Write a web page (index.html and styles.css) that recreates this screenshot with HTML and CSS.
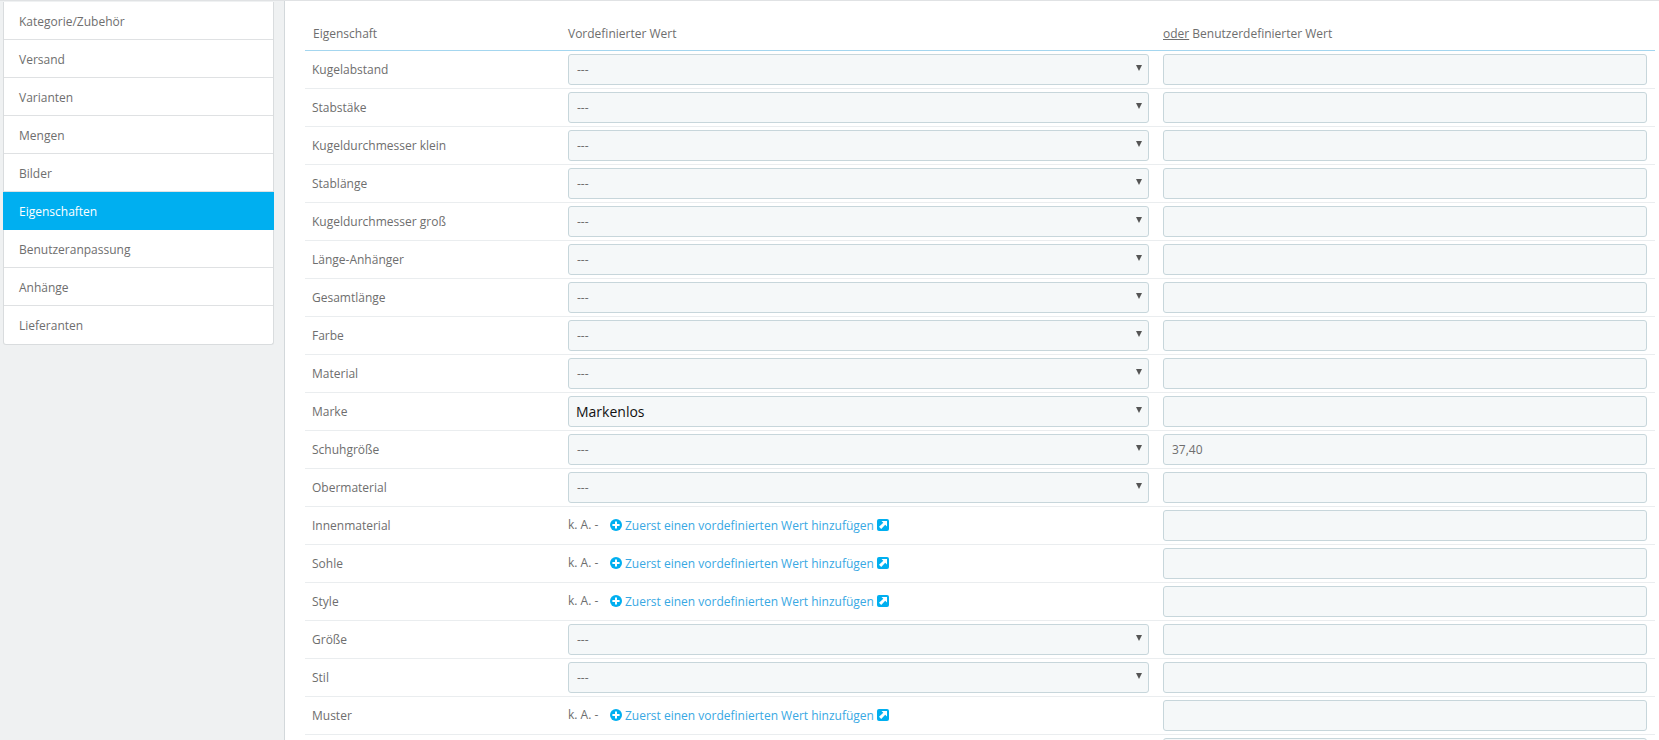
FILE: index.html
```html
<!DOCTYPE html>
<html lang="de">
<head>
<meta charset="utf-8">
<title>Eigenschaften</title>
<link rel="stylesheet" href="styles.css">
</head>
<body>
<svg class="defs" width="0" height="0" aria-hidden="true">
  <symbol id="plus" viewBox="0 0 12 12"><circle cx="6" cy="6" r="6" fill="currentColor"/><path d="M5 2.4h2V5h2.6v2H7v2.6H5V7H2.4V5H5z" fill="#fff"/></symbol>
  <symbol id="ext" viewBox="0 0 12 12"><rect width="12" height="12" rx="2" fill="currentColor"/><path d="M4.5 2h5.5v5.5L8.2 5.7 4.2 10 2 7.8 6.3 3.8z" fill="#fff"/></symbol>
</svg>
<div class="page">
  <nav class="side">
    <a class="side-item">Kategorie/Zubehör</a>
    <a class="side-item">Versand</a>
    <a class="side-item">Varianten</a>
    <a class="side-item">Mengen</a>
    <a class="side-item">Bilder</a>
    <a class="side-item active">Eigenschaften</a>
    <a class="side-item">Benutzeranpassung</a>
    <a class="side-item">Anhänge</a>
    <a class="side-item">Lieferanten</a>
  </nav>
  <main class="main">
    <table class="features">
      <colgroup><col class="c1"><col class="c2"><col class="c3"></colgroup>
      <thead>
        <tr><th>Eigenschaft</th><th>Vordefinierter Wert</th><th><u>oder</u> Benutzerdefinierter Wert</th></tr>
      </thead>
      <tbody>
        <tr><td>Kugelabstand</td><td><div class="sel"><select><option>---</option></select></div></td><td><input type="text"></td></tr>
        <tr><td>Stabstäke</td><td><div class="sel"><select><option>---</option></select></div></td><td><input type="text"></td></tr>
        <tr><td>Kugeldurchmesser klein</td><td><div class="sel"><select><option>---</option></select></div></td><td><input type="text"></td></tr>
        <tr><td>Stablänge</td><td><div class="sel"><select><option>---</option></select></div></td><td><input type="text"></td></tr>
        <tr><td>Kugeldurchmesser groß</td><td><div class="sel"><select><option>---</option></select></div></td><td><input type="text"></td></tr>
        <tr><td>Länge-Anhänger</td><td><div class="sel"><select><option>---</option></select></div></td><td><input type="text"></td></tr>
        <tr><td>Gesamtlänge</td><td><div class="sel"><select><option>---</option></select></div></td><td><input type="text"></td></tr>
        <tr><td>Farbe</td><td><div class="sel"><select><option>---</option></select></div></td><td><input type="text"></td></tr>
        <tr><td>Material</td><td><div class="sel"><select><option>---</option></select></div></td><td><input type="text"></td></tr>
        <tr><td>Marke</td><td><div class="sel"><select class="big"><option>Markenlos</option></select></div></td><td><input type="text"></td></tr>
        <tr><td>Schuhgröße</td><td><div class="sel"><select><option>---</option></select></div></td><td><input type="text" value="37,40"></td></tr>
        <tr><td>Obermaterial</td><td><div class="sel"><select><option>---</option></select></div></td><td><input type="text"></td></tr>
        <tr><td>Innenmaterial</td><td><div class="none"><span class="na">k. A. -</span><a class="add"><svg class="ico"><use href="#plus"/></svg>Zuerst einen vordefinierten Wert hinzufügen<svg class="ico"><use href="#ext"/></svg></a></div></td><td><input type="text"></td></tr>
        <tr><td>Sohle</td><td><div class="none"><span class="na">k. A. -</span><a class="add"><svg class="ico"><use href="#plus"/></svg>Zuerst einen vordefinierten Wert hinzufügen<svg class="ico"><use href="#ext"/></svg></a></div></td><td><input type="text"></td></tr>
        <tr><td>Style</td><td><div class="none"><span class="na">k. A. -</span><a class="add"><svg class="ico"><use href="#plus"/></svg>Zuerst einen vordefinierten Wert hinzufügen<svg class="ico"><use href="#ext"/></svg></a></div></td><td><input type="text"></td></tr>
        <tr><td>Größe</td><td><div class="sel"><select><option>---</option></select></div></td><td><input type="text"></td></tr>
        <tr><td>Stil</td><td><div class="sel"><select><option>---</option></select></div></td><td><input type="text"></td></tr>
        <tr><td>Muster</td><td><div class="none"><span class="na">k. A. -</span><a class="add"><svg class="ico"><use href="#plus"/></svg>Zuerst einen vordefinierten Wert hinzufügen<svg class="ico"><use href="#ext"/></svg></a></div></td><td><input type="text"></td></tr>
        <tr><td></td><td></td><td><input type="text"></td></tr>
      </tbody>
    </table>
  </main>
</div>
</body>
</html>
```
FILE: styles.css
```css
* { box-sizing: border-box; }
html, body { height: 100%; margin: 0; overflow: hidden; }
body {
  background: #eff1f2;
  font-family: "Open Sans", sans-serif;
  font-size: 12px;
  color: #6e6e6e;
}
.defs { position: absolute; }
.page {
  display: flex;
  align-items: flex-start;
  height: 740px;
  border-top: 1px solid #e0e2e4;
}
.side {
  flex: none;
  display: flex;
  flex-direction: column;
  width: 271px;
  height: 343px;
  margin: 1px 0 0 3px;
  background: #fff;
  border: 1px solid #d9dcde;
  border-top: 0;
  border-radius: 0 0 3px 3px;
}
.side-item {
  flex: none;
  height: 38px;
  padding: 0 15px;
  line-height: 39px;
  border-bottom: 1px solid #dfe1e3;
  color: #6e6e6e;
}
.side-item:last-child { border-bottom: 0; }
.side-item.active {
  margin: 0 -1px;
  padding: 0 16px;
  background: #00aff0;
  color: #fff;
  border-bottom: 0;
}
.main {
  flex: 1;
  height: 100%;
  margin-left: 10px;
  padding: 0 4px 0 20px;
  background: #fff;
  border-left: 1px solid #d3d8db;
}
.features {
  width: 1350px;
  table-layout: fixed;
  border-collapse: collapse;
}
.c1 { width: 256px; }
.c2 { width: 595px; }
.c3 { width: 499px; }
th {
  height: 49px;
  padding: 17px 7px 0;
  font-weight: 400;
  text-align: left;
  border-bottom: 1px solid #a4d6ef;
}
th:first-child { padding-left: 8px; }
td {
  height: 38px;
  padding: 3px 7px;
  border-bottom: 1px solid #eaedef;
}
td:last-child { padding-right: 8px; }
select, input {
  display: block;
  width: 100%;
  height: 31px;
  margin: 0;
  padding: 0 8px;
  font: 12px "Open Sans", sans-serif;
  color: #6e6e6e;
  background: #f5f8f9;
  border: 1px solid #c7d6db;
  border-radius: 3px;
  outline: 0;
}
.sel { position: relative; }
.sel::after {
  content: "";
  position: absolute;
  top: 11px;
  right: 7px;
  border-style: solid;
  border-width: 6px 3px 0;
  border-color: #555 transparent transparent;
}
select { appearance: none; }
select.big { font-size: 14px; font-weight: 400; color: #111; padding-left: 7px; }
.none { display: flex; align-items: center; height: 31px; }
.na { width: 42px; margin-top: -2px; }
.add { display: flex; align-items: center; gap: 3px; color: #38a8e3; }
.ico { flex: none; width: 12px; height: 12px; color: #00aff0; }
```
